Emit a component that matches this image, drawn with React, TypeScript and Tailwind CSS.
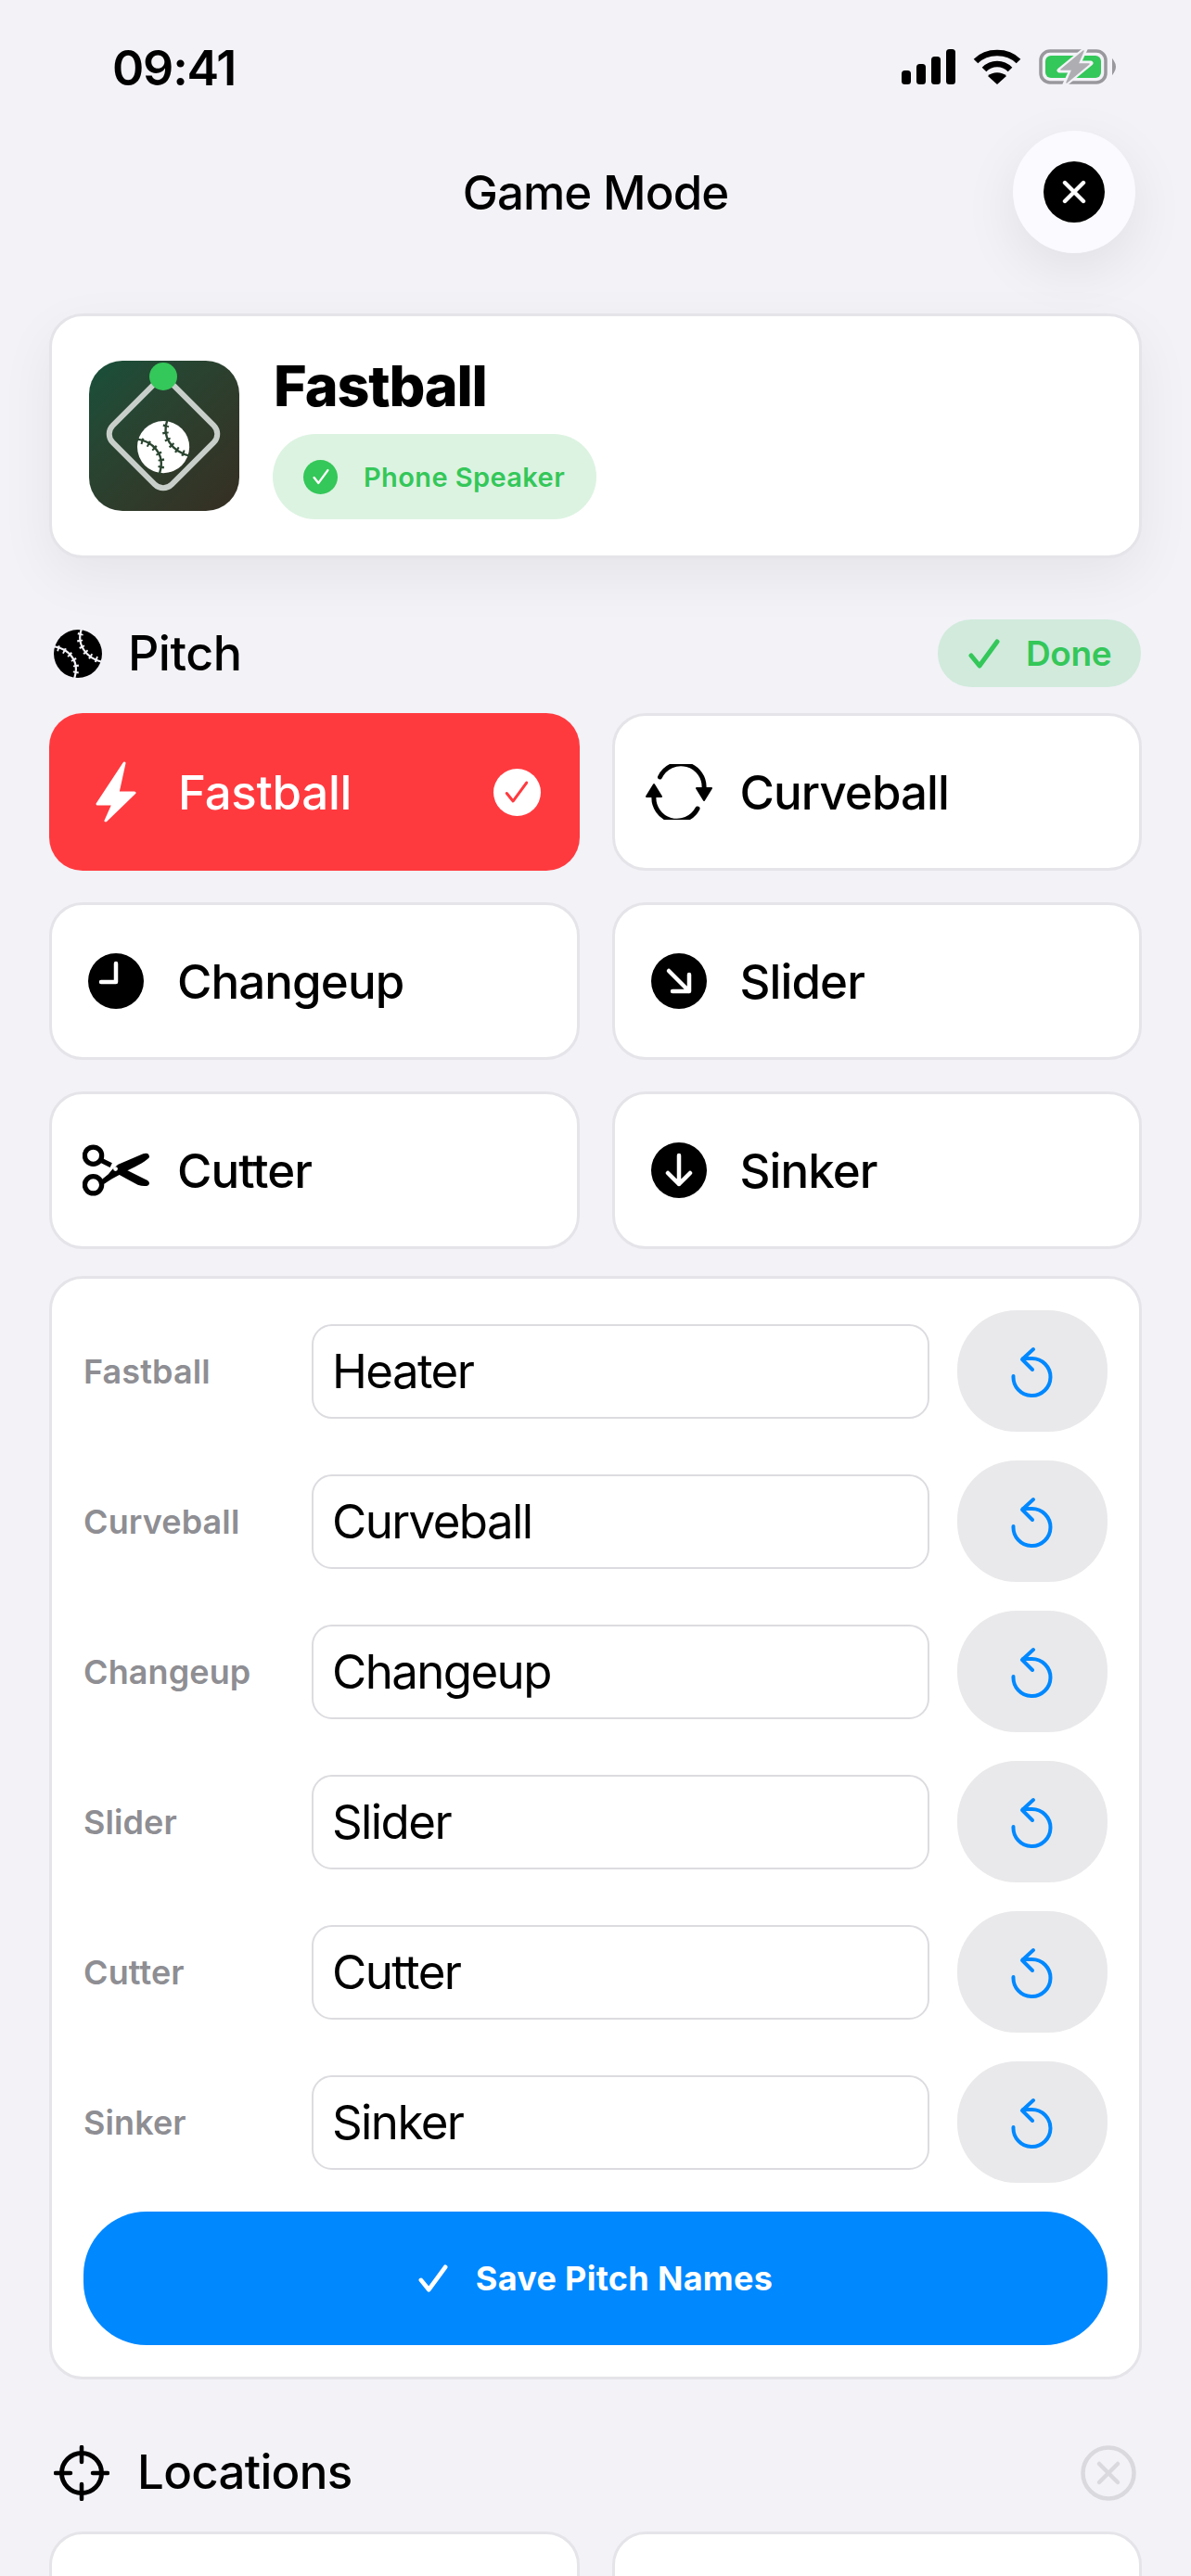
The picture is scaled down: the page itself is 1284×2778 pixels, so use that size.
import type { ReactNode } from "react";

const pitches = ["Fastball", "Curveball", "Changeup", "Slider", "Cutter", "Sinker"];
const customNames = ["Heater", "Curveball", "Changeup", "Slider", "Cutter", "Sinker"];

const Seams = ({ color }: { color: string }) => (
  <g fill="none" stroke={color}>
    <path d="M30 -1C24 15 34 31 53 35" strokeWidth="2.2" />
    <path d="M-1 18C15 20 29 33 22 53" strokeWidth="2.2" />
    <path d="M29 4C25 15 34 29 49 33" strokeWidth="6" strokeDasharray="2 5" />
    <path d="M4 20C16 23 28 34 23 49" strokeWidth="6" strokeDasharray="2 5" />
  </g>
);

const BaseballIcon = () => (
  <svg viewBox="0 0 52 52" className="w-[52px] h-[52px]">
    <circle cx="26" cy="26" r="26" fill="#000" />
    <Seams color="#f2f2f7" />
  </svg>
);

const AppLogo = () => (
  <div className="w-[162px] h-[162px] rounded-[36px] bg-linear-to-br from-[#16503a] to-[#352e22] shrink-0">
    <svg viewBox="0 0 162 162" className="w-[162px] h-[162px]">
      <rect x="35" y="34" width="90" height="90" rx="13" transform="rotate(45 80 79)" fill="none" stroke="#c8cfca" strokeWidth="6" />
      <circle cx="80" cy="17" r="15" fill="#34c759" />
      <g transform="translate(52 65) scale(1.08)">
        <circle cx="26" cy="26" r="26" fill="#fff" />
        <Seams color="#2a4530" />
      </g>
    </svg>
  </div>
);

const CheckMark = ({ className, color, width }: { className: string; color: string; width: number }) => (
  <svg viewBox="0 0 34 32" className={className} fill="none" stroke={color} strokeWidth={width} strokeLinecap="round" strokeLinejoin="round">
    <path d="M3 18L12 29L31 3" />
  </svg>
);

const Zap = () => (
  <svg viewBox="0 0 44 66" className="w-[44px] h-[66px]" fill="#fff" stroke="#fff" strokeWidth="3" strokeLinejoin="round">
    <path d="M31 2L2 46H19L11 64L42 34H24Z" />
  </svg>
);

const Curve = () => (
  <svg viewBox="0 0 72 60" className="w-[72px] h-[60px]">
    <g fill="none" stroke="#000" strokeWidth="5" strokeLinecap="round">
      <path d="M15.5 14A25 25 0 0 1 63 27" />
      <path d="M56 48A25 25 0 0 1 9 34" />
    </g>
    <g fill="#000" stroke="#000" strokeWidth="2" strokeLinejoin="round">
      <path d="M55 26H71L63 39Z" />
      <path d="M1 35H17L9 22Z" />
    </g>
  </svg>
);

const Clock = () => (
  <svg viewBox="0 0 60 60" className="w-[60px] h-[60px]">
    <circle cx="30" cy="30" r="30" fill="#000" />
    <path d="M30 11V31H14" fill="none" stroke="#fff" strokeWidth="4.5" strokeLinecap="round" strokeLinejoin="round" />
  </svg>
);

const ArrowCircle = ({ d }: { d: string }) => (
  <svg viewBox="0 0 60 60" className="w-[60px] h-[60px]">
    <circle cx="30" cy="30" r="30" fill="#000" />
    <path d={d} fill="none" stroke="#fff" strokeWidth="4.5" strokeLinecap="round" strokeLinejoin="round" />
  </svg>
);

const Scissors = () => (
  <svg viewBox="0 0 75 57" className="w-[79px] h-[60px]">
    <circle cx="12" cy="12" r="9.5" fill="none" stroke="#000" strokeWidth="5.5" />
    <circle cx="12" cy="45" r="9.5" fill="none" stroke="#000" strokeWidth="5.5" />
    <path d="M20 17L32 23" stroke="#000" strokeWidth="5.5" />
    <path d="M19 41L29 33Q33 27 40 22L68 10Q75 8 75 14Q70 20 50 29L35 37Q30 40 21 46Z" fill="#000" />
    <path d="M40 33L49 28L73 40Q77 43 73 46Q68 47 62 45Z" fill="#000" />
    <circle cx="37" cy="27" r="2.5" fill="#fff" />
  </svg>
);

const ResetIcon = () => (
  <svg viewBox="0 0 48 56" className="w-[48px] h-[56px]" fill="none" stroke="#0088ff" strokeWidth="4" strokeLinecap="round" strokeLinejoin="round">
    <path d="M25 4L13 15L24 26" />
    <path d="M14 14H23.5A20 20 0 1 1 3.5 33" />
  </svg>
);

const Scope = () => (
  <svg viewBox="0 0 60 60" className="w-[60px] h-[60px]" fill="none" stroke="#000" strokeLinecap="round">
    <circle cx="30" cy="30" r="21.5" strokeWidth="5" />
    <path d="M30 2V18M30 42V58M2 30H18M42 30H58" strokeWidth="4.5" />
  </svg>
);

const StatusIcons = () => (
  <div className="flex items-center gap-[19px]">
    <svg viewBox="0 0 58 38" className="w-[58px] h-[38px]" fill="#000">
      <rect x="0" y="23" width="10" height="15" rx="3.5" />
      <rect x="16" y="16" width="10" height="22" rx="3.5" />
      <rect x="32" y="8" width="10" height="30" rx="3.5" />
      <rect x="48" y="0" width="10" height="38" rx="3.5" />
    </svg>
    <svg viewBox="0 0 52 38" className="w-[52px] h-[38px]" fill="none" stroke="#000" strokeWidth="6.5">
      <path d="M3 13C15 1 37 1 49 13" />
      <path d="M12 22C20 14 32 14 40 22" />
      <path d="M26 38L16 29C21 24 31 24 36 29Z" fill="#000" stroke="none" />
    </svg>
    <svg viewBox="0 0 84 40" className="w-[84px] h-[40px]">
      <rect x="2" y="3" width="70" height="34" rx="10" fill="none" stroke="#98989d" strokeWidth="3.5" />
      <rect x="7" y="8" width="60" height="24" rx="6" fill="#34c759" />
      <path d="M80 14Q84 20 80 26Z" fill="#98989d" stroke="#98989d" strokeWidth="2" />
      <path d="M50 1L22 24H35L28 39L56 16H43Z" fill="#f2f2f7" stroke="#f2f2f7" strokeWidth="5" strokeLinejoin="round" />
      <path d="M48 3L24 23H36L30 37L54 17H42Z" fill="#aeaeb2" stroke="#aeaeb2" strokeWidth="1.5" strokeLinejoin="round" />
    </svg>
  </div>
);

const PitchCard = ({ label, icon, selected }: { label: string; icon: ReactNode; selected?: boolean }) => (
  <div
    className={`h-[170px] rounded-[36px] flex items-center pr-[42px] ${
      selected ? "bg-[#ff3a3f] text-white pl-[36px]" : "bg-white text-black border-[3px] border-[#e4e4e9] pl-[33px]"
    }`}
  >
    <div className="w-[72px] flex justify-center shrink-0">{icon}</div>
    <span className={`pt-[2px] text-[51px] font-[550] ${selected ? "ml-[31px] tracking-[-0.3px]" : "ml-[30px] tracking-[-0.9px]"}`}>{label}</span>
    {selected && (
      <div className="ml-auto w-[51px] h-[51px] rounded-full bg-white flex items-center justify-center">
        <CheckMark className="w-[26px] h-[26px]" color="#ff3a3f" width={4} />
      </div>
    )}
  </div>
);

const NameRow = ({ label, value }: { label: string; value: string }) => (
  <div className="flex items-center h-[131px]">
    <span className="w-[246px] shrink-0 text-[36px] font-semibold text-[#8e8e93] tracking-[0.1px]">{label}</span>
    <div className="w-[666px] h-[102px] rounded-[22px] border-2 border-[#dcdce0] flex items-center pl-[20px] pt-[2px] text-[51px] text-black tracking-[-1.6px]">
      {value}
    </div>
    <button className="ml-[30px] w-[162px] h-[131px] rounded-[64px] bg-[#e9e9eb] flex items-center justify-center">
      <ResetIcon />
    </button>
  </div>
);

export default function App() {
  return (
    <div className="w-[1284px] h-[2778px] overflow-hidden bg-[#f2f2f7] font-['Inter',sans-serif] text-black">
      <div className="flex items-center justify-between h-[52px] mt-[46px] pl-[121px] pr-[80px]">
        <span className="text-[52px] font-semibold tracking-[-1.2px] leading-none pt-[3px]">09:41</span>
        <StatusIcons />
      </div>

      <div className="grid grid-cols-[1fr_auto_1fr] items-center h-[132px] mt-[43px]">
        <div />
        <h1 className="text-[51px] font-[550] tracking-[-0.9px] pt-[2px]">Game Mode</h1>
        <div className="flex justify-end pr-[60px]">
          <div className="w-[132px] h-[132px] rounded-full bg-[#fafaff] shadow-[0_18px_60px_rgba(0,0,0,0.08)] flex items-center justify-center">
            <div className="w-[66px] h-[66px] rounded-full bg-black flex items-center justify-center">
              <svg viewBox="0 0 26 26" className="w-[26px] h-[26px]" stroke="#fff" strokeWidth="4.4" strokeLinecap="round">
                <path d="M3 3L23 23M23 3L3 23" />
              </svg>
            </div>
          </div>
        </div>
      </div>

      <div className="px-[53px]">
        <div className="mt-[65px] h-[264px] rounded-[36px] bg-white border-[3px] border-[#e4e4e9] shadow-[0_20px_60px_rgba(0,0,0,0.06)] flex items-center pl-[40px] gap-[37px]">
          <AppLogo />
          <div className="flex flex-col items-start">
            <span className="text-[61px] font-extrabold tracking-[-1.2px] leading-[72px]">Fastball</span>
            <div className="mt-[16px] h-[92px] w-[349px] -ml-[1px] rounded-[46px] bg-[#dcf3e1] flex items-center pl-[33px]">
              <div className="w-[37px] h-[37px] rounded-full bg-[#34c759] flex items-center justify-center">
                <CheckMark className="w-[18px] h-[18px]" color="#fff" width={4.5} />
              </div>
              <span className="ml-[28px] pt-[2px] text-[29px] font-semibold text-[#34c759] tracking-[0.4px]">Phone Speaker</span>
            </div>
          </div>
        </div>

        <div className="mt-[66px] mb-[28px] h-[73px] flex items-center justify-between pl-[5px]">
          <div className="flex items-center gap-[28px]">
            <BaseballIcon />
            <span className="text-[52px] font-[550] tracking-[-0.5px]">Pitch</span>
          </div>
          <div className="w-[219px] h-[73px] rounded-[36px] bg-[#d1eadc] flex items-center pl-[33px] mr-[1px]">
            <CheckMark className="w-[34px] h-[32px]" color="#34c759" width={5} />
            <span className="ml-[28px] text-[37px] font-semibold text-[#34c759] tracking-[-0.4px]">Done</span>
          </div>
        </div>

        <div className="grid grid-cols-2 gap-x-[35px] gap-y-[34px]">
          <PitchCard label={pitches[0]} icon={<Zap />} selected />
          <PitchCard label={pitches[1]} icon={<Curve />} />
          <PitchCard label={pitches[2]} icon={<Clock />} />
          <PitchCard label={pitches[3]} icon={<ArrowCircle d="M19 19L41 41M41 23V41H23" />} />
          <PitchCard label={pitches[4]} icon={<Scissors />} />
          <PitchCard label={pitches[5]} icon={<ArrowCircle d="M30 14V45M18 33L30 45L42 33" />} />
        </div>

        <div className="mt-[29px] rounded-[36px] bg-white border-[3px] border-[#e4e4e9] p-[34px] flex flex-col gap-[31px]">
          {pitches.map((pitch, i) => (
            <NameRow key={pitch} label={pitch} value={customNames[i]} />
          ))}
          <button className="h-[144px] rounded-[68px] bg-[#0088ff] flex items-center justify-center gap-[30px]">
            <CheckMark className="w-[32px] h-[30px]" color="#fff" width={5} />
            <span className="text-[36px] font-bold text-white tracking-[0.3px]">Save Pitch Names</span>
          </button>
        </div>

        <div className="mt-[70px] h-[61px] flex items-center justify-between pl-[5px] pr-[6px]">
          <div className="flex items-center gap-[30px]">
            <Scope />
            <span className="text-[51px] font-[550] tracking-[-0.7px]">Locations</span>
          </div>
          <svg viewBox="0 0 60 60" className="w-[60px] h-[60px]" fill="none" stroke="#d9d9de" strokeWidth="4.5" strokeLinecap="round">
            <circle cx="30" cy="30" r="27.5" />
            <path d="M20 20L40 40M40 20L20 40" />
          </svg>
        </div>

        <div className="mt-[33px] grid grid-cols-2 gap-x-[35px]">
          <div className="h-[170px] rounded-[36px] bg-white border-[3px] border-[#e4e4e9]" />
          <div className="h-[170px] rounded-[36px] bg-white border-[3px] border-[#e4e4e9]" />
        </div>
      </div>
    </div>
  );
}
